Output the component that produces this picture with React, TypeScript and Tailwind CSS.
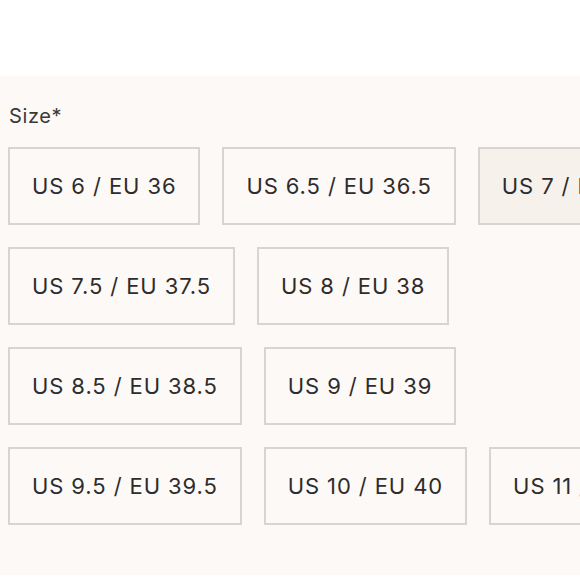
const rows: { label: string; active?: boolean }[][] = [
  [{ label: "US 6 / EU 36" }, { label: "US 6.5 / EU 36.5" }, { label: "US 7 / EU 37", active: true }],
  [{ label: "US 7.5 / EU 37.5" }, { label: "US 8 / EU 38" }],
  [{ label: "US 8.5 / EU 38.5" }, { label: "US 9 / EU 39" }],
  [{ label: "US 9.5 / EU 39.5" }, { label: "US 10 / EU 40" }, { label: "US 11 / EU 41" }],
]

export default function App() {
  return (
    <div className="w-[580px] h-[580px] overflow-hidden bg-white" style={{ fontFamily: "Inter, 'Open Sans', sans-serif" }}>
      <div className="mt-[76px] h-[499px] bg-[#fdf9f7] pl-2 pt-[26px]">
        <label className="block pl-px text-[20px] leading-[28px] tracking-[0.6px] text-[#3b3838]">Size*</label>
        <div className="mt-[17px] flex flex-col gap-[22px] w-[720px]">
          {rows.map((row, i) => (
            <div key={i} className="flex gap-[22px]">
              {row.map((size) => (
                <button
                  key={size.label}
                  className={`h-[78px] shrink-0 whitespace-nowrap border-2 border-[#d8d4d1] px-[22px] text-[22px] tracking-[0.9px] text-[#2e2c2c] ${
                    size.active ? "bg-[#f7f1ec]" : "bg-[#fdf9f7]"
                  }`}
                >
                  {size.label}
                </button>
              ))}
            </div>
          ))}
        </div>
      </div>
    </div>
  )
}
